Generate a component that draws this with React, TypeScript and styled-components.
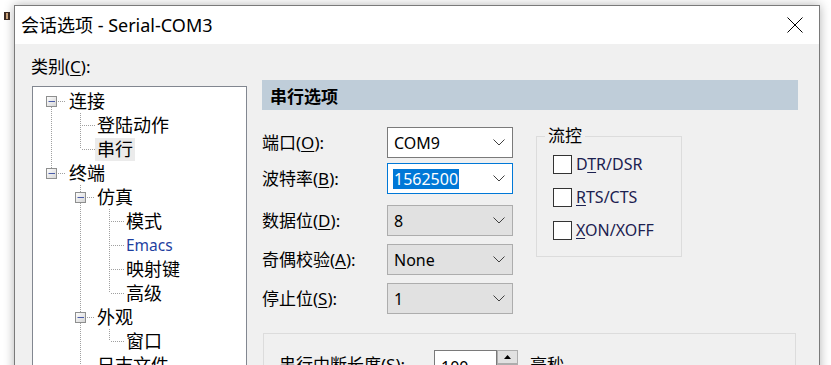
import React from 'react';
import styled, { createGlobalStyle } from 'styled-components';

const GlobalStyle = createGlobalStyle`
  html, body { margin: 0; padding: 0; background: #fff; }
  body {
    width: 831px; height: 365px; overflow: hidden;
    font-family: "Noto Sans", "Noto Sans CJK SC", sans-serif;
    color: #000;
  }
  * { box-sizing: border-box; }
`;

const Page = styled.div`
  position: relative;
  width: 831px;
  height: 365px;
  overflow: hidden;
  background: #fff;
  padding: 5px 0 0 14px;
`;

const BehindIcon = styled.div`
  position: absolute;
  left: 4px;
  top: 12px;
  width: 6px;
  height: 8px;
  border: 1px solid #3b2a22;
  border-left-width: 2px;
  border-right-width: 2px;
  background: #c9a27a;
`;

const Window = styled.div`
  width: 806px;
  height: 420px;
  border: 1px solid #7a7a7a;
  box-shadow: 0 0 10px rgba(0, 0, 0, 0.3);
  background: #f0f0f0;
  display: flex;
  flex-direction: column;
`;

const TitleBar = styled.div`
  height: 38px;
  flex: none;
  background: #fff;
  display: flex;
  align-items: center;
  justify-content: space-between;
  padding: 0 16px 0 6px;
`;

const TitleText = styled.div`
  font-size: 18px;
  line-height: 22px;
  color: #000;
`;

const Body = styled.div`
  display: flex;
  padding: 12px 21px 0 17px;
`;

const LeftColumn = styled.div`
  width: 215px;
  flex: none;
  display: flex;
  flex-direction: column;
`;

const CatLabel = styled.div`
  font-size: 17px;
  line-height: 22px;
  margin-left: -1px;
  margin-bottom: 8px;
`;

const Mn = styled.span`
  text-decoration: underline;
  text-underline-offset: 2px;
  text-decoration-thickness: 1px;
`;

const TreeBox = styled.div`
  height: 300px;
  background: #fff;
  border: 1px solid #828790;
  padding: 2px 0 0 4px;
  display: flex;
  flex-direction: column;
`;

const TreeRow = styled.div`
  display: flex;
  align-items: center;
  height: 24px;
`;

const CellSvg = styled.svg`
  width: 29px;
  height: 24px;
  flex: none;
  display: block;
`;

const NodeLabel = styled.span<{ $selected?: boolean; $hot?: boolean; $lvl0?: boolean }>`
  font-size: ${(p) => (p.$hot ? '15.5px' : '18px')};
  line-height: 23px;
  height: 23px;
  padding: 0 2px;
  margin-left: ${(p) => (p.$lvl0 ? '1px' : '0')};
  white-space: nowrap;
  background: ${(p) => (p.$selected ? '#ebebeb' : 'transparent')};
  color: ${(p) => (p.$hot ? '#1f3f9f' : '#000')};
`;

const RightPanel = styled.div`
  flex: 1;
  margin-left: 15px;
  display: flex;
  flex-direction: column;
`;

const Header = styled.div`
  margin-top: 24px;
  height: 30px;
  background: #bfcdd9;
  display: flex;
  align-items: center;
  padding-left: 8px;
  font-size: 17px;
  font-weight: bold;
`;

const FormArea = styled.div`
  display: flex;
  margin-top: 17px;
`;

const Fields = styled.div`
  display: flex;
  flex-direction: column;
`;

const FieldRow = styled.div<{ $mt: number }>`
  display: flex;
  align-items: center;
  height: 31px;
  margin-top: ${(p) => p.$mt}px;
`;

const FieldLabel = styled.div`
  width: 125px;
  font-size: 17px;
  line-height: 22px;
  white-space: nowrap;
`;

const Combo = styled.div<{ $variant: 'edit' | 'focus' | 'list' }>`
  width: 126px;
  height: 31px;
  display: flex;
  align-items: center;
  justify-content: space-between;
  padding: 0 7px 0 5px;
  font-size: 16px;
  border: 1px solid
    ${(p) => (p.$variant === 'focus' ? '#0078d7' : p.$variant === 'edit' ? '#7a7a7a' : '#adadad')};
  background: ${(p) => (p.$variant === 'list' ? '#e1e1e1' : '#fff')};
`;

const ComboText = styled.span<{ $sel?: boolean }>`
  line-height: 20px;
  padding: 0 1px;
  background: ${(p) => (p.$sel ? '#0078d7' : 'transparent')};
  color: ${(p) => (p.$sel ? '#fff' : '#000')};
`;

const FlowGroup = styled.fieldset`
  margin: 0 0 0 23px;
  width: 146px;
  height: 130px;
  border: 1px solid #dcdcdc;
  padding: 10px 0 0 16px;
  display: flex;
  flex-direction: column;
  gap: 14px;
`;

const Legend = styled.legend`
  font-size: 17px;
  line-height: 18px;
  padding: 0 3px;
  margin-left: -8px;
`;

const CheckRow = styled.label`
  display: flex;
  align-items: center;
  height: 19px;
  gap: 4px;
`;

const CheckBox = styled.span`
  width: 19px;
  height: 19px;
  border: 1px solid #333;
  background: #fff;
  flex: none;
`;

const CheckText = styled.span`
  font-size: 16px;
  line-height: 19px;
  color: #1c2150;
`;

const BreakGroup = styled.div`
  margin: 19px 2px 0 1px;
  height: 60px;
  border: 1px solid #dcdcdc;
  padding: 16px 0 0 15px;
  display: flex;
  align-items: flex-start;
`;

const BreakLabel = styled.div`
  width: 155px;
  font-size: 17px;
  line-height: 22px;
  padding-top: 4px;
  white-space: nowrap;
`;

const SpinInput = styled.div`
  width: 63px;
  height: 28px;
  background: #fff;
  border: 1px solid #7a7a7a;
  font-size: 16px;
  line-height: 26px;
  padding: 3px 0 0 6px;
`;

const SpinButtons = styled.div`
  width: 21px;
  height: 28px;
  display: flex;
  flex-direction: column;
`;

const SpinBtn = styled.div`
  height: 14px;
  background: #e1e1e1;
  border: 1px solid #adadad;
  display: flex;
  align-items: center;
  justify-content: center;
`;

const Unit = styled.div`
  margin-left: 12px;
  font-size: 17px;
  line-height: 22px;
  padding-top: 4px;
`;

const Chevron = () => (
  <svg width="12" height="7" viewBox="0 0 12 7">
    <polyline points="0.5,0.5 6,6 11.5,0.5" fill="none" stroke="#404040" strokeWidth="1" />
  </svg>
);

const CloseIcon = () => (
  <svg width="16" height="16" viewBox="0 0 16 16">
    <line x1="0.5" y1="0.5" x2="15.5" y2="15.5" stroke="#000" strokeWidth="1" />
    <line x1="15.5" y1="0.5" x2="0.5" y2="15.5" stroke="#000" strokeWidth="1" />
  </svg>
);

type Own = { kind: 'box' | 'leaf'; up: boolean; down: boolean };
type TNode = { label: string; cols: boolean[]; own: Own; selected?: boolean; hot?: boolean };

const DOT = '#a0a0a0';

const GuideCell = ({ v }: { v: boolean }) => (
  <CellSvg viewBox="0 0 29 24">
    {v && <line x1="14.5" y1="0" x2="14.5" y2="24" stroke={DOT} strokeDasharray="1 1" />}
  </CellSvg>
);

const OwnCell = ({ own }: { own: Own }) => {
  if (own.kind === 'leaf') {
    return (
      <CellSvg viewBox="0 0 29 24">
        {own.up && <line x1="14.5" y1="0" x2="14.5" y2="12" stroke={DOT} strokeDasharray="1 1" />}
        {own.down && <line x1="14.5" y1="12" x2="14.5" y2="24" stroke={DOT} strokeDasharray="1 1" />}
        <line x1="16" y1="12.5" x2="29" y2="12.5" stroke={DOT} strokeDasharray="1 1" />
      </CellSvg>
    );
  }
  return (
    <CellSvg viewBox="0 0 29 24">
      <defs>
        <linearGradient id="bx" x1="0" y1="0" x2="1" y2="1">
          <stop offset="0" stopColor="#ffffff" />
          <stop offset="1" stopColor="#d4d4d4" />
        </linearGradient>
      </defs>
      {own.up && <line x1="14.5" y1="0" x2="14.5" y2="7" stroke={DOT} strokeDasharray="1 1" />}
      {own.down && <line x1="14.5" y1="18" x2="14.5" y2="24" stroke={DOT} strokeDasharray="1 1" />}
      <rect x="9.5" y="7.5" width="10" height="10" fill="url(#bx)" stroke="#8e8f8f" />
      <line x1="11.5" y1="12.5" x2="18" y2="12.5" stroke="#4a5ca8" strokeWidth="1" />
      <line x1="21" y1="12.5" x2="29" y2="12.5" stroke={DOT} strokeDasharray="1 1" />
    </CellSvg>
  );
};

const nodes: TNode[] = [
  { label: '连接', cols: [], own: { kind: 'box', up: false, down: true } },
  { label: '登陆动作', cols: [true], own: { kind: 'leaf', up: true, down: true } },
  { label: '串行', cols: [true], own: { kind: 'leaf', up: true, down: false }, selected: true },
  { label: '终端', cols: [], own: { kind: 'box', up: true, down: false } },
  { label: '仿真', cols: [false], own: { kind: 'box', up: true, down: true } },
  { label: '模式', cols: [false, true], own: { kind: 'leaf', up: true, down: true } },
  { label: 'Emacs', cols: [false, true], own: { kind: 'leaf', up: true, down: true }, hot: true },
  { label: '映射键', cols: [false, true], own: { kind: 'leaf', up: true, down: true } },
  { label: '高级', cols: [false, true], own: { kind: 'leaf', up: true, down: false } },
  { label: '外观', cols: [false], own: { kind: 'box', up: true, down: true } },
  { label: '窗口', cols: [false, true], own: { kind: 'leaf', up: true, down: false } },
  { label: '日志文件', cols: [false], own: { kind: 'leaf', up: true, down: true } },
  { label: '打印', cols: [false], own: { kind: 'leaf', up: true, down: true } },
];

type Field = { pre: string; mn: string; value: string; variant: 'edit' | 'focus' | 'list'; mt: number };
const fields: Field[] = [
  { pre: '端口', mn: 'O', value: 'COM9', variant: 'edit', mt: 0 },
  { pre: '波特率', mn: 'B', value: '1562500', variant: 'focus', mt: 5 },
  { pre: '数据位', mn: 'D', value: '8', variant: 'list', mt: 11 },
  { pre: '奇偶校验', mn: 'A', value: 'None', variant: 'list', mt: 8 },
  { pre: '停止位', mn: 'S', value: '1', variant: 'list', mt: 8 },
];

export default function App() {
  return (
    <>
      <GlobalStyle />
      <Page>
        <BehindIcon />
        <Window>
          <TitleBar>
            <TitleText>会话选项 - Serial-COM3</TitleText>
            <CloseIcon />
          </TitleBar>
          <Body>
            <LeftColumn>
              <CatLabel>
                类别(<Mn>C</Mn>):
              </CatLabel>
              <TreeBox>
                {nodes.map((n) => (
                  <TreeRow key={n.label}>
                    {n.cols.map((c, i) => (
                      <GuideCell key={i} v={c} />
                    ))}
                    <OwnCell own={n.own} />
                    <NodeLabel $selected={n.selected} $hot={n.hot} $lvl0={n.cols.length === 0}>
                      {n.label}
                    </NodeLabel>
                  </TreeRow>
                ))}
              </TreeBox>
            </LeftColumn>
            <RightPanel>
              <Header>串行选项</Header>
              <FormArea>
                <Fields>
                  {fields.map((f) => (
                    <FieldRow key={f.pre} $mt={f.mt}>
                      <FieldLabel>
                        {f.pre}(<Mn>{f.mn}</Mn>):
                      </FieldLabel>
                      <Combo $variant={f.variant}>
                        <ComboText $sel={f.variant === 'focus'}>{f.value}</ComboText>
                        <Chevron />
                      </Combo>
                    </FieldRow>
                  ))}
                </Fields>
                <FlowGroup>
                  <Legend>流控</Legend>
                  <CheckRow>
                    <CheckBox />
                    <CheckText>
                      D<Mn>T</Mn>R/DSR
                    </CheckText>
                  </CheckRow>
                  <CheckRow>
                    <CheckBox />
                    <CheckText>
                      <Mn>R</Mn>TS/CTS
                    </CheckText>
                  </CheckRow>
                  <CheckRow>
                    <CheckBox />
                    <CheckText>
                      <Mn>X</Mn>ON/XOFF
                    </CheckText>
                  </CheckRow>
                </FlowGroup>
              </FormArea>
              <BreakGroup>
                <BreakLabel>
                  串行中断长度(<Mn>S</Mn>):
                </BreakLabel>
                <SpinInput>100</SpinInput>
                <SpinButtons>
                  <SpinBtn>
                    <svg width="7" height="4" viewBox="0 0 7 4">
                      <polygon points="3.5,0 7,4 0,4" fill="#000" />
                    </svg>
                  </SpinBtn>
                  <SpinBtn />
                </SpinButtons>
                <Unit>毫秒</Unit>
              </BreakGroup>
            </RightPanel>
          </Body>
        </Window>
      </Page>
    </>
  );
}
